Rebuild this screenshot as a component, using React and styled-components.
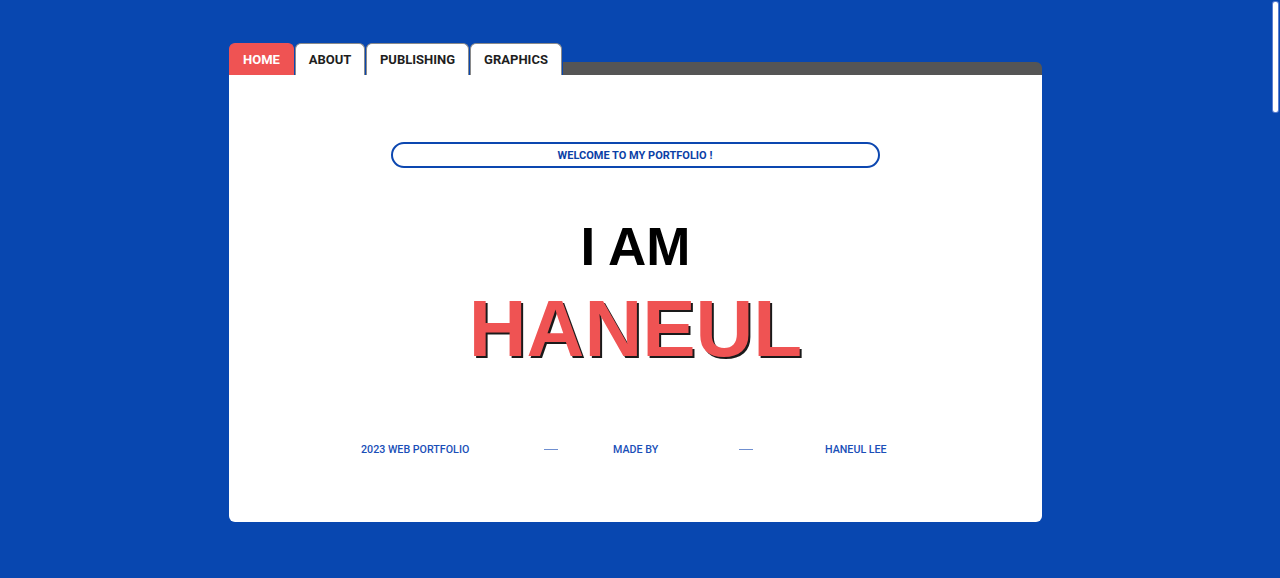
import React from "react";
import styled, { createGlobalStyle } from "styled-components";

const GlobalStyle = createGlobalStyle`
  html, body {
    margin: 0;
    padding: 0;
    background: #0847b0;
    font-family: Roboto, "Liberation Sans", sans-serif;
    overflow: hidden;
  }
`;

const Page = styled.div`
  height: 578px;
  padding-top: 43px;
  box-sizing: border-box;
`;

const Window = styled.div`
  width: 813px;
  margin-left: 229px;
`;

const TabBar = styled.div`
  display: flex;
  align-items: flex-end;
  gap: 1px;
  height: 32px;
`;

const Tab = styled.div`
  width: ${(p) => p.$w}px;
  height: 32px;
  box-sizing: border-box;
  display: flex;
  align-items: center;
  justify-content: center;
  border-radius: 6px 6px 0 0;
  background: ${(p) => (p.$active ? "#ef5353" : "#ffffff")};
  border: 1px solid ${(p) => (p.$active ? "#ef5353" : "#8a8a8a")};
  border-bottom: none;
  color: ${(p) => (p.$active ? "#ffffff" : "#1e1e1e")};
  font-size: 13px;
  font-weight: 700;
`;

const TabFill = styled.div`
  flex: 1;
  height: 13px;
  background: #555555;
  border-radius: 0 6px 0 0;
`;

const Body = styled.div`
  background: #ffffff;
  height: 447px;
  border-radius: 0 0 6px 6px;
  padding-top: 67px;
  box-sizing: border-box;
  display: flex;
  flex-direction: column;
  align-items: center;
`;

const Welcome = styled.div`
  width: 489px;
  height: 26px;
  margin-right: 1px;
  box-sizing: border-box;
  border: 2px solid #0c47b0;
  border-radius: 13px;
  display: flex;
  align-items: center;
  justify-content: center;
  color: #0b3fa6;
  font-size: 11px;
  font-weight: 700;
`;

const IAm = styled.div`
  margin-top: 52px;
  font-family: "Liberation Sans", Arial, sans-serif;
  font-size: 53px;
  line-height: 1;
  font-weight: 700;
  color: #000000;
`;

const Name = styled.div`
  margin-top: 16px;
  font-family: "Liberation Sans", Arial, sans-serif;
  font-size: 80px;
  line-height: 1;
  font-weight: 700;
  color: #ef5353;
  text-shadow: 2px 2px 0 #1a1a1a;
`;

const Footer = styled.div`
  align-self: stretch;
  margin-top: 74px;
  padding-left: 132px;
  display: grid;
  grid-template-columns: 183px 69px 126px 86px auto;
  align-items: center;
  color: #1a4fb8;
  font-size: 10.7px;
  font-weight: 500;
  line-height: 13px;
`;

const Dash = styled.span`
  display: block;
  width: 14px;
  height: 1px;
  background: #6f8fd0;
`;

const ScrollThumb = styled.div`
  position: fixed;
  top: 2px;
  right: 2px;
  width: 5px;
  height: 110px;
  background: #ffffff;
  border-radius: 2px;
  box-shadow: 0 0 0 1px #5b7fd0;
`;

const tabs = [
  { label: "HOME", w: 65, active: true },
  { label: "ABOUT", w: 70 },
  { label: "PUBLISHING", w: 103 },
  { label: "GRAPHICS", w: 92 },
];

export default function App() {
  return (
    <>
      <GlobalStyle />
      <Page>
        <Window>
          <TabBar>
            {tabs.map((t) => (
              <Tab key={t.label} $active={t.active} $w={t.w}>
                {t.label}
              </Tab>
            ))}
            <TabFill />
          </TabBar>
          <Body>
            <Welcome>WELCOME TO MY PORTFOLIO !</Welcome>
            <IAm>I AM</IAm>
            <Name>HANEUL</Name>
            <Footer>
              <span>2023 WEB PORTFOLIO</span>
              <Dash />
              <span>MADE BY</span>
              <Dash />
              <span>HANEUL LEE</span>
            </Footer>
          </Body>
        </Window>
      </Page>
      <ScrollThumb />
    </>
  );
}
